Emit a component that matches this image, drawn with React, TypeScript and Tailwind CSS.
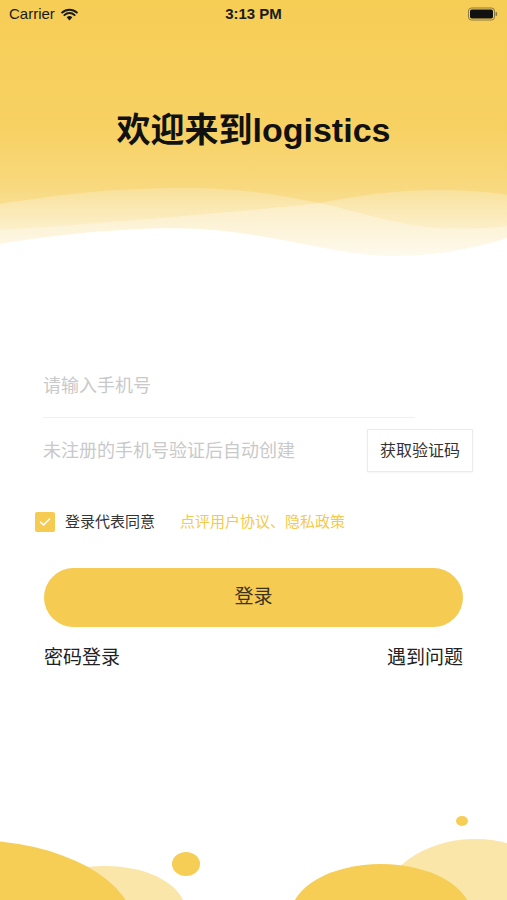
import React from "react";

const font = { fontFamily: '"Liberation Sans", "Noto Sans CJK SC", sans-serif' };

function StatusBar() {
  return (
    <div className="relative flex h-[28px] items-center justify-between px-[9px] text-[15px] text-[#1a1a1a]">
      <div className="flex items-center gap-[6px]">
        <span>Carrier</span>
        <svg width="17" height="13" viewBox="0 0 17 13">
          <path d="M8.5 12.5 L5.6 9.3 A4.2 4.2 0 0 1 11.4 9.3 Z" fill="#1a1a1a" />
          <path d="M3.4 7.1 A7.4 7.4 0 0 1 13.6 7.1" stroke="#1a1a1a" strokeWidth="2" fill="none" strokeLinecap="round" />
          <path d="M1.2 4.6 A10.6 10.6 0 0 1 15.8 4.6" stroke="#1a1a1a" strokeWidth="2" fill="none" strokeLinecap="round" />
        </svg>
      </div>
      <span className="absolute left-1/2 -translate-x-1/2 font-bold">3:13 PM</span>
      <svg width="30" height="14" viewBox="0 0 30 14">
        <rect x="0.5" y="1" width="26" height="12" rx="3" fill="none" stroke="#8a7a40" strokeWidth="1" />
        <rect x="2" y="2.5" width="23" height="9" rx="1.8" fill="#111" />
        <rect x="27.5" y="5" width="1.6" height="4" rx="0.8" fill="#8a7a40" />
      </svg>
    </div>
  );
}

function HeaderWaves() {
  return (
    <svg className="absolute inset-0" width="507" height="260" viewBox="0 0 507 260" preserveAspectRatio="none">
      <defs>
        <linearGradient id="hg" x1="0" y1="0" x2="0" y2="1">
          <stop offset="0" stopColor="#f6cd55" />
          <stop offset="0.5" stopColor="#f7d163" />
          <stop offset="0.72" stopColor="#f8d97f" />
          <stop offset="0.9" stopColor="#fae7ae" />
          <stop offset="1" stopColor="#fcf1d2" />
        </linearGradient>
        <linearGradient id="wg" x1="0" y1="0" x2="0" y2="1">
          <stop offset="0" stopColor="#ffffff" stopOpacity="0.2" />
          <stop offset="1" stopColor="#ffffff" stopOpacity="0.5" />
        </linearGradient>
      </defs>
      <rect width="507" height="260" fill="url(#hg)" />
      <path
        d="M0,204 C60,194 120,187 200,188 C260,190 290,198 320,203 C360,195 400,189 450,190 C480,191 495,193 507,195 L507,260 L0,260 Z"
        fill="url(#wg)"
      />
      <path
        d="M0,230 C90,224 220,214 320,203 C360,212 400,226 440,228 C470,229 490,228 507,226 L507,260 L0,260 Z"
        fill="#ffffff"
        opacity="0.3"
      />
      <path
        d="M0,244 C60,234 140,226 200,229 C260,232 310,248 370,255 C420,259 470,250 507,238 L507,260 L0,260 Z"
        fill="#ffffff"
      />
    </svg>
  );
}

function BottomDecor() {
  return (
    <svg className="block" width="507" height="120" viewBox="0 0 507 120">
      <ellipse cx="105" cy="130" rx="80" ry="44" fill="#fae6a8" />
      <ellipse cx="-30" cy="150" rx="165" ry="90" fill="#f6cd55" />
      <ellipse cx="186" cy="84" rx="14" ry="12" fill="#f6cd55" />
      <ellipse cx="462" cy="41" rx="6" ry="5" fill="#f6cd55" />
      <ellipse cx="475" cy="130" rx="95" ry="71" fill="#fae6a8" />
      <ellipse cx="381" cy="135" rx="90" ry="51" fill="#f6cd55" />
    </svg>
  );
}

export default function App() {
  return (
    <div className="flex h-[900px] w-[507px] flex-col overflow-hidden bg-white" style={font}>
      <div className="relative h-[260px]">
        <HeaderWaves />
        <StatusBar />
        <h1 className="relative mt-[82px] text-center text-[34px] leading-[40px] font-bold text-[#111]">
          欢迎来到logistics
        </h1>
      </div>

      <div className="ml-[43px] mt-[108px] h-[50px] w-[372px] border-b border-[#f0f0f0] pt-[6px]">
        <div className="text-[18px] leading-[24px] text-[#c9c9c9]">请输入手机号</div>
      </div>

      <div className="mt-[11px] flex h-[43px] items-center justify-between pl-[43px] pr-[34px]">
        <span className="text-[18px] leading-[24px] text-[#c9c9c9]">未注册的手机号验证后自动创建</span>
        <button className="flex h-[43px] w-[106px] items-center justify-center border border-[#ececec] bg-white text-[16px] text-[#333] shadow-[0_1px_2px_rgba(0,0,0,0.04)]">
          获取验证码
        </button>
      </div>

      <div className="mt-[40px] flex h-[20px] items-center pl-[35px] text-[15px]">
        <span className="flex h-[20px] w-[20px] items-center justify-center rounded-[2px] bg-[#f6cb52]">
          <svg width="12" height="10" viewBox="0 0 12 10">
            <path d="M1.5 5 L4.5 8 L10.5 2" stroke="#fff" strokeWidth="1.6" fill="none" strokeLinecap="round" strokeLinejoin="round" />
          </svg>
        </span>
        <span className="ml-[10px] text-[#333]">登录代表同意</span>
        <span className="ml-[25px] text-[#f5c94c]">点评用户协议、隐私政策</span>
      </div>

      <button className="mx-[44px] mt-[36px] flex h-[59px] items-center justify-center rounded-full bg-[#f6cb52] text-[19px] text-[#3a3320]">
        登录
      </button>

      <div className="mx-[44px] mt-[18px] flex items-center justify-between text-[19px] leading-[26px] text-[#222]">
        <span>密码登录</span>
        <span>遇到问题</span>
      </div>

      <div className="flex-1" />
      <BottomDecor />
    </div>
  );
}
